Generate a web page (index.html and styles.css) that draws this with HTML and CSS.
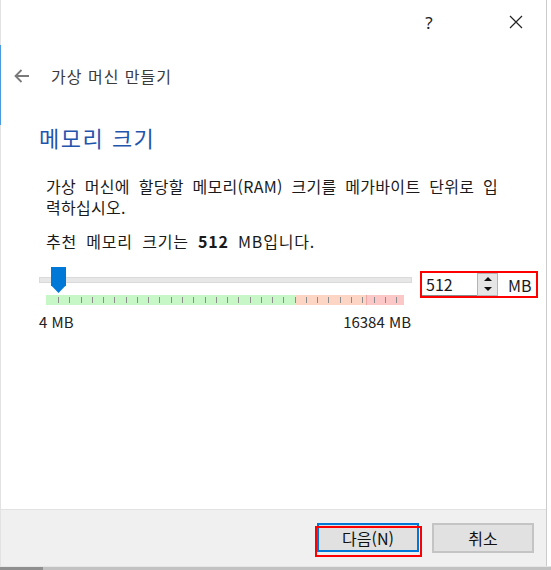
FILE: index.html
```html
<!DOCTYPE html>
<html lang="ko">
<head>
  <meta charset="UTF-8" />
  <title>가상 머신 만들기</title>
  <link rel="stylesheet" href="styles.css">
</head>
<body>
  <div class="window">
    <!-- 제목 표시줄 -->
    <div class="titlebar">
      <span class="cap-btn help">?</span>
      <span class="cap-btn close">
        <svg width="14" height="14" viewBox="0 0 14 14"><path d="M1 1L13 13M13 1L1 13" stroke="#222" stroke-width="1.2" fill="none"/></svg>
      </span>
    </div>

    <div class="header">
      <svg class="back" width="16" height="14" viewBox="0 0 16 14"><path d="M15 7H1.5M7.5 1L1.5 7l6 6" stroke="#7a7a7a" stroke-width="1.8" fill="none"/></svg>
      <span class="wizard-title">가상 머신 만들기</span>
    </div>

    <div class="content">
      <h1 class="heading">메모리 크기</h1>
      <p class="desc">가상 머신에 할당할 메모리(RAM) 크기를 메가바이트 단위로 입<br>력하십시오.</p>
      <p class="desc recommend">추천 메모리 크기는 <b>512</b> MB입니다.</p>

      <div class="slider-row">
        <div class="slider">
          <div class="track-wrap">
            <div class="track"></div>
            <div class="handle"></div>
          </div>
          <div class="ticks"></div>
          <div class="range-labels">
            <span>4 MB</span>
            <span>16384 MB</span>
          </div>
        </div>
        <div class="spin-box">
          <div class="spin-input">
            <span class="value">512</span>
            <span class="spin-btns">
              <span class="arrow up"></span>
              <span class="arrow down"></span>
            </span>
          </div>
          <span class="unit">MB</span>
        </div>
      </div>
    </div>

    <div class="footer">
      <button class="btn primary">다음(N)</button>
      <button class="btn">취소</button>
    </div>
  </div>
  <div class="strip"></div>
</body>
</html>
```

FILE: styles.css
```css
html, body {
  margin: 0;
  padding: 0;
  background: #fff;
  font-family: "Noto Sans CJK KR", "Liberation Sans", sans-serif;
  color: #1a1a1a;
  overflow: hidden;
}

.window {
  width: 545px;
  height: 566px;
  border-left: 1px solid #e2e2e2;
  border-right: 1px solid #cbcbcb;
  display: flex;
  flex-direction: column;
  position: relative;
}
.window::before {
  content: '';
  position: absolute;
  left: -1px;
  top: 45px;
  width: 1px;
  height: 80px;
  background: #4a9be0;
}

.titlebar {
  height: 44px;
  display: flex;
  justify-content: flex-end;
  align-items: center;
  padding-right: 7px;
  gap: 41px;
}
.cap-btn {
  width: 46px;
  height: 44px;
  display: flex;
  align-items: center;
  justify-content: center;
}
.help {
  font-family: "Noto Sans", sans-serif;
  font-size: 17px;
  color: #222;
}

.header {
  height: 64px;
  display: flex;
  align-items: center;
  padding-left: 13px;
  gap: 21px;
}
.wizard-title {
  font-size: 16px;
  color: #3a3a3a;
  letter-spacing: 1px;
}

.content {
  padding-left: 38px;
}
.heading {
  margin: 15px 0 0;
  font-size: 22px;
  line-height: 28px;
  font-weight: normal;
  color: #1f55ad;
  letter-spacing: 1.5px;
}
.desc {
  margin: 25px 0 0 7px;
  font-size: 16px;
  line-height: 21px;
  letter-spacing: 0.3px;
  word-spacing: 4px;
}
.desc.recommend {
  margin-top: 13px;
  letter-spacing: 0.8px;
}

.slider-row {
  display: flex;
  align-items: flex-start;
  margin-top: 15px;
}
.slider {
  width: 373px;
}
.track-wrap {
  height: 28px;
  position: relative;
}
.track {
  position: relative;
  top: 10px;
  height: 4px;
  background: #e7e7e7;
  border: 1px solid #dadada;
}
.handle {
  position: absolute;
  left: 12px;
  top: 0;
  width: 15px;
  height: 26px;
  background: #0078d7;
  clip-path: polygon(0 0, 100% 0, 100% 70%, 50% 100%, 0 70%);
}
.ticks {
  margin-left: 7px;
  width: 358px;
  height: 10px;
  background:
    repeating-linear-gradient(90deg, #8c8c8c 0 1px, transparent 1px 11.27px) 12px 2px / 340px 6px no-repeat,
    linear-gradient(90deg, #c7f7c7 0 250px, #fcd5c4 250px 320px, #efa8a8 320px 321px, #fbc7c7 321px);
}
.range-labels {
  display: flex;
  justify-content: space-between;
  margin-top: 7px;
  font-size: 15px;
  line-height: 20px;
  color: #222;
  padding-right: 1px;
}

.spin-box {
  margin: 4px 0 0 8px;
  width: 114px;
  height: 23px;
  border: 2px solid #f00;
  display: flex;
  align-items: center;
}
.spin-input {
  width: 76px;
  height: 23px;
  display: flex;
  align-items: center;
  justify-content: space-between;
  box-sizing: border-box;
  border-bottom: 1px solid #8a8a8a;
  padding-left: 4px;
}
.value {
  font-size: 16px;
}
.spin-btns {
  width: 19px;
  height: 21px;
  background: #e6e6e6;
  border: 1px solid #b5b5b5;
  display: flex;
  flex-direction: column;
  align-items: center;
  justify-content: space-around;
}
.arrow {
  width: 0;
  height: 0;
  border-left: 4px solid transparent;
  border-right: 4px solid transparent;
}
.arrow.up { border-bottom: 4px solid #111; }
.arrow.down { border-top: 4px solid #111; }
.unit {
  margin-left: 10px;
  font-size: 16px;
}

.footer {
  margin-top: auto;
  height: 57px;
  border-top: 1px solid #e2e2e2;
  background: #f0f0f0;
  display: flex;
  justify-content: flex-end;
  align-items: flex-start;
  padding: 13px 12px 0 0;
  box-sizing: border-box;
  gap: 13px;
}
.btn {
  width: 102px;
  height: 30px;
  background: #e1e1e1;
  border: 2px solid #c4c4c4;
  font-family: "Noto Sans CJK KR", sans-serif;
  font-size: 16px;
  color: #111;
  padding: 0;
}
.btn.primary {
  position: relative;
  height: 29px;
  border-color: #0078d7;
}
.btn.primary::after {
  content: '';
  position: absolute;
  left: -4px;
  top: 1px;
  width: 103px;
  height: 27px;
  border: 2px solid #f00;
}

.strip {
  height: 4px;
  background: linear-gradient(90deg, #8f8f8f 0 43px, #c2c2c2 43px);
  border-top: 1px solid #e6e6e6;
}
```
